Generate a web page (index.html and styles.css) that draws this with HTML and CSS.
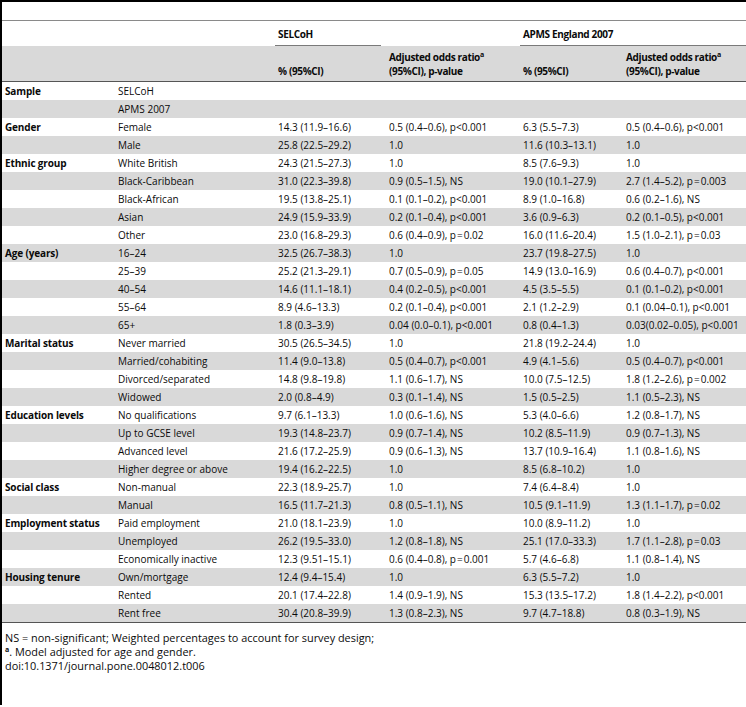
FILE: index.html
```html
<!DOCTYPE html>
<html>
<head>
<meta charset="utf-8">
<link rel="stylesheet" href="styles.css">
</head>
<body>
<div class="frame">
  <div class="topgap"></div>
  <table class="tbl">
    <colgroup>
      <col class="c1"><col class="c2"><col class="c3"><col class="c4"><col class="c5"><col class="c6">
    </colgroup>
    <thead>
      <tr class="hr1">
        <th></th><th></th>
        <th colspan="2"><span class="grp grp-a">SELCoH</span></th>
        <th colspan="2"><span class="grp grp-b">APMS England 2007</span></th>
      </tr>
      <tr class="hr2">
        <th></th><th></th>
        <th>% (95%CI)</th>
        <th>Adjusted odds ratio<sup>a</sup><br>(95%CI), p-value</th>
        <th>% (95%CI)</th>
        <th>Adjusted odds ratio<sup>a</sup><br>(95%CI), p-value</th>
      </tr>
    </thead>
    <tbody>
      <tr><td class="lab">Sample</td><td>SELCoH</td><td></td><td></td><td></td><td></td></tr>
      <tr class="g"><td></td><td>APMS 2007</td><td></td><td></td><td></td><td></td></tr>
      <tr><td class="lab">Gender</td><td>Female</td><td>14.3 (11.9–16.6)</td><td>0.5 (0.4–0.6), p&lt;0.001</td><td>6.3 (5.5–7.3)</td><td>0.5 (0.4–0.6), p&lt;0.001</td></tr>
      <tr class="g"><td></td><td>Male</td><td>25.8 (22.5–29.2)</td><td>1.0</td><td>11.6 (10.3–13.1)</td><td>1.0</td></tr>
      <tr><td class="lab">Ethnic group</td><td>White British</td><td>24.3 (21.5–27.3)</td><td>1.0</td><td>8.5 (7.6–9.3)</td><td>1.0</td></tr>
      <tr class="g"><td></td><td>Black-Caribbean</td><td>31.0 (22.3–39.8)</td><td>0.9 (0.5–1.5), NS</td><td>19.0 (10.1–27.9)</td><td>2.7 (1.4–5.2), p&#8202;=&#8202;0.003</td></tr>
      <tr><td></td><td>Black-African</td><td>19.5 (13.8–25.1)</td><td>0.1 (0.1–0.2), p&lt;0.001</td><td>8.9 (1.0–16.8)</td><td>0.6 (0.2–1.6), NS</td></tr>
      <tr class="g"><td></td><td>Asian</td><td>24.9 (15.9–33.9)</td><td>0.2 (0.1–0.4), p&lt;0.001</td><td>3.6 (0.9–6.3)</td><td>0.2 (0.1–0.5), p&lt;0.001</td></tr>
      <tr><td></td><td>Other</td><td>23.0 (16.8–29.3)</td><td>0.6 (0.4–0.9), p&#8202;=&#8202;0.02</td><td>16.0 (11.6–20.4)</td><td>1.5 (1.0–2.1), p&#8202;=&#8202;0.03</td></tr>
      <tr class="g"><td class="lab">Age (years)</td><td>16–24</td><td>32.5 (26.7–38.3)</td><td>1.0</td><td>23.7 (19.8–27.5)</td><td>1.0</td></tr>
      <tr><td></td><td>25–39</td><td>25.2 (21.3–29.1)</td><td>0.7 (0.5–0.9), p&#8202;=&#8202;0.05</td><td>14.9 (13.0–16.9)</td><td>0.6 (0.4–0.7), p&lt;0.001</td></tr>
      <tr class="g"><td></td><td>40–54</td><td>14.6 (11.1–18.1)</td><td>0.4 (0.2–0.5), p&lt;0.001</td><td>4.5 (3.5–5.5)</td><td>0.1 (0.1–0.2), p&lt;0.001</td></tr>
      <tr><td></td><td>55–64</td><td>8.9 (4.6–13.3)</td><td>0.2 (0.1–0.4), p&lt;0.001</td><td>2.1 (1.2–2.9)</td><td>0.1 (0.04–0.1), p&lt;0.001</td></tr>
      <tr class="g"><td></td><td>65+</td><td>1.8 (0.3–3.9)</td><td>0.04 (0.0–0.1), p&lt;0.001</td><td>0.8 (0.4–1.3)</td><td>0.03(0.02–0.05), p&lt;0.001</td></tr>
      <tr><td class="lab">Marital status</td><td>Never married</td><td>30.5 (26.5–34.5)</td><td>1.0</td><td>21.8 (19.2–24.4)</td><td>1.0</td></tr>
      <tr class="g"><td></td><td>Married/cohabiting</td><td>11.4 (9.0–13.8)</td><td>0.5 (0.4–0.7), p&lt;0.001</td><td>4.9 (4.1–5.6)</td><td>0.5 (0.4–0.7), p&lt;0.001</td></tr>
      <tr><td></td><td>Divorced/separated</td><td>14.8 (9.8–19.8)</td><td>1.1 (0.6–1.7), NS</td><td>10.0 (7.5–12.5)</td><td>1.8 (1.2–2.6), p&#8202;=&#8202;0.002</td></tr>
      <tr class="g"><td></td><td>Widowed</td><td>2.0 (0.8–4.9)</td><td>0.3 (0.1–1.4), NS</td><td>1.5 (0.5–2.5)</td><td>1.1 (0.5–2.3), NS</td></tr>
      <tr><td class="lab">Education levels</td><td>No qualifications</td><td>9.7 (6.1–13.3)</td><td>1.0 (0.6–1.6), NS</td><td>5.3 (4.0–6.6)</td><td>1.2 (0.8–1.7), NS</td></tr>
      <tr class="g"><td></td><td>Up to GCSE level</td><td>19.3 (14.8–23.7)</td><td>0.9 (0.7–1.4), NS</td><td>10.2 (8.5–11.9)</td><td>0.9 (0.7–1.3), NS</td></tr>
      <tr><td></td><td>Advanced level</td><td>21.6 (17.2–25.9)</td><td>0.9 (0.6–1.3), NS</td><td>13.7 (10.9–16.4)</td><td>1.1 (0.8–1.6), NS</td></tr>
      <tr class="g"><td></td><td>Higher degree or above</td><td>19.4 (16.2–22.5)</td><td>1.0</td><td>8.5 (6.8–10.2)</td><td>1.0</td></tr>
      <tr><td class="lab">Social class</td><td>Non-manual</td><td>22.3 (18.9–25.7)</td><td>1.0</td><td>7.4 (6.4–8.4)</td><td>1.0</td></tr>
      <tr class="g"><td></td><td>Manual</td><td>16.5 (11.7–21.3)</td><td>0.8 (0.5–1.1), NS</td><td>10.5 (9.1–11.9)</td><td>1.3 (1.1–1.7), p&#8202;=&#8202;0.02</td></tr>
      <tr><td class="lab">Employment status</td><td>Paid employment</td><td>21.0 (18.1–23.9)</td><td>1.0</td><td>10.0 (8.9–11.2)</td><td>1.0</td></tr>
      <tr class="g"><td></td><td>Unemployed</td><td>26.2 (19.5–33.0)</td><td>1.2 (0.8–1.8), NS</td><td>25.1 (17.0–33.3)</td><td>1.7 (1.1–2.8), p&#8202;=&#8202;0.03</td></tr>
      <tr><td></td><td>Economically inactive</td><td>12.3 (9.51–15.1)</td><td>0.6 (0.4–0.8), p&#8202;=&#8202;0.001</td><td>5.7 (4.6–6.8)</td><td>1.1 (0.8–1.4), NS</td></tr>
      <tr class="g"><td class="lab">Housing tenure</td><td>Own/mortgage</td><td>12.4 (9.4–15.4)</td><td>1.0</td><td>6.3 (5.5–7.2)</td><td>1.0</td></tr>
      <tr><td></td><td>Rented</td><td>20.1 (17.4–22.8)</td><td>1.4 (0.9–1.9), NS</td><td>15.3 (13.5–17.2)</td><td>1.8 (1.4–2.2), p&lt;0.001</td></tr>
      <tr class="g"><td></td><td>Rent free</td><td>30.4 (20.8–39.9)</td><td>1.3 (0.8–2.3), NS</td><td>9.7 (4.7–18.8)</td><td>0.8 (0.3–1.9), NS</td></tr>
    </tbody>
  </table>
  <div class="notes">
    <p>NS = non-significant; Weighted percentages to account for survey design;</p>
    <p><sup>a</sup>. Model adjusted for age and gender.</p>
    <p>doi:10.1371/journal.pone.0048012.t006</p>
  </div>
</div>
</body>
</html>
```

FILE: styles.css
```css
html, body {
  margin: 0;
  padding: 0;
  background: #fff;
}
body {
  font-family: "Open Sans", "DejaVu Sans", sans-serif;
  font-size: 10px;
  color: #0a0a0a;
  width: 746px;
  height: 707px;
  overflow: hidden;
}
.frame {
  border-top: 2px solid #000;
  border-left: 2px solid #000;
  height: 705px;
  box-sizing: border-box;
}
.topgap {
  height: 18px;
  border-bottom: 1px solid #8a8a8a;
}
.tbl {
  border-collapse: collapse;
  width: 744px;
  table-layout: fixed;
}
.c1 { width: 113px; }
.c2 { width: 160px; }
.c3 { width: 111px; }
.c4 { width: 134px; }
.c5 { width: 103px; }
.c6 { width: 123px; }
.tbl th, .tbl td {
  padding: 0 3px;
  text-align: left;
  white-space: nowrap;
}
.tbl th {
  font-weight: 700;
  vertical-align: bottom;
  letter-spacing: -0.35px;
}
.hr1 th {
  height: 25px;
  padding: 0;
  vertical-align: bottom;
}
.grp {
  display: block;
  padding: 0 3px 4px;
  line-height: 14px;
}
.grp-a {
  border-bottom: 1px solid #7a7a7a;
  margin-right: 139px;
}
.grp-b {
  border-bottom: 1px solid #7a7a7a;
}
.hr2 th {
  height: 32px;
  background: #d9d9d9;
  border-bottom: 1px solid #555;
  line-height: 14px;
  padding-bottom: 3px;
}
sup {
  font-size: 7px;
  font-weight: 700;
  vertical-align: 4px;
  line-height: 0;
}
.tbl td {
  height: 18px;
  line-height: 18px;
  vertical-align: middle;
}
.tbl td.lab {
  font-weight: 700;
  letter-spacing: -0.15px;
}
.tbl tr.g td {
  background: #d9d9d9;
}
.tbl tbody tr:last-child td {
  border-bottom: 1px solid #555;
}
.notes {
  padding: 8px 3px 0;
  font-size: 10.9px;
}
.notes p {
  margin: 0;
  line-height: 14px;
}
```
